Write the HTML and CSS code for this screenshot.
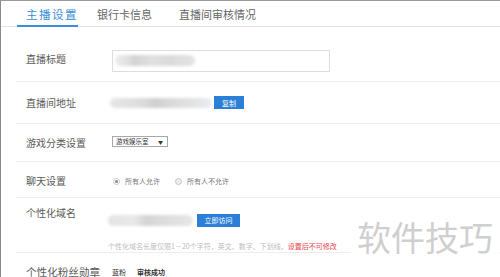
FILE: index.html
```html
<!DOCTYPE html>
<html lang="zh-CN">
<head>
<meta charset="utf-8">
<link rel="stylesheet" href="styles.css">
</head>
<body>
<div class="frame">
  <div class="tabs">
    <div class="tab active">主播设置</div>
    <div class="tab">银行卡信息</div>
    <div class="tab">直播间审核情况</div>
  </div>
  <div class="form">
    <div class="row r1">
      <div class="label">直播标题</div>
      <div class="field">
        <div class="input"><span class="blob b1"></span></div>
      </div>
    </div>
    <div class="row r2">
      <div class="label">直播间地址</div>
      <div class="field inline shift2">
        <span class="blob b2"></span>
        <span class="btn btn-copy">复制</span>
      </div>
    </div>
    <div class="row r3">
      <div class="label">游戏分类设置</div>
      <div class="field">
        <div class="select"><span>游戏娱乐室</span><span class="arrow">▼</span></div>
      </div>
    </div>
    <div class="row r4">
      <div class="label">聊天设置</div>
      <div class="field inline radios">
        <span class="radio checked"></span><span class="rtext">所有人允许</span>
        <span class="radio second"></span><span class="rtext">所有人不允许</span>
      </div>
    </div>
    <div class="row r5">
      <div class="label">个性化域名</div>
      <div class="field shift4">
        <div class="inline">
          <span class="blob b3"></span>
          <span class="btn btn-visit">立即访问</span>
        </div>
        <div class="hint">个性化域名长度仅限1－20个字符，英文、数字、下划线，<span class="warn">设置后不可修改</span></div>
      </div>
    </div>
    <div class="row r6">
      <div class="label big">个性化粉丝勋章</div>
      <div class="field inline badge">
        <span class="fan">蓝粉</span><span class="status">审核成功</span>
      </div>
    </div>
  </div>
  <div class="watermark">软件技巧</div>
</div>
</body>
</html>
```

FILE: styles.css
```css
html, body {
  margin: 0;
  padding: 0;
  background: #fff;
}
body {
  font-family: "Noto Sans CJK SC", "Noto Sans", sans-serif;
  overflow: hidden;
}
.frame {
  position: relative;
  height: 277px;
  box-sizing: border-box;
  border-top: 1px solid #9a9a9a;
  border-left: 1px solid #8a8a8a;
  overflow: hidden;
}
.tabs {
  display: flex;
  align-items: flex-end;
  height: 25px;
  padding-left: 16px;
  border-bottom: 1px solid #e3e3e3;
}
.tab {
  font-size: 11px;
  color: #666;
  line-height: 14px;
  padding: 0 0 5px;
  margin-right: 27px;
  white-space: nowrap;
}
.tab.active {
  font-size: 11.5px;
  letter-spacing: 1.5px;
  color: #3b8ed8;
  padding: 0 0 4px 9px;
  margin-right: 19px;
  border-bottom: 2px solid #3b8ed8;
  margin-bottom: -1px;
}
.form {
  padding-top: 13px;
  padding-left: 15px;
}
.row {
  display: flex;
  align-items: center;
  border-bottom: 1px solid #eeeeee;
  box-sizing: border-box;
}
.label {
  width: 86px;
  padding-left: 10px;
  font-size: 10px;
  color: #5a5a5a;
  line-height: 14px;
  flex: none;
  white-space: nowrap;
}
.label.big {
  font-size: 10.6px;
}
.field {
  flex: none;
}
.inline {
  display: flex;
  align-items: center;
}
.r1 { height: 42px; }
.r1 .label { margin-top: -4px; }
.r2 { height: 42px; }
.r3 { height: 38px; }
.r4 { height: 36px; padding-top: 3px; }
.r5 {
  height: 55px;
  align-items: flex-start;
  padding-top: 8px;
}
.r6 {
  height: 40px;
  align-items: flex-start;
  padding-top: 13px;
  border-bottom: none;
}
.r6 .label { line-height: 12px; }
.input {
  width: 214px;
  height: 20px;
  border: 1px solid #dddddd;
  display: flex;
  align-items: center;
  padding-left: 2px;
}
.blob {
  display: block;
  filter: blur(1.5px);
  border-radius: 6px;
}
.b1 {
  width: 80px;
  height: 11px;
  background: linear-gradient(90deg, #ececec 0%, #e2e2e2 15%, #d2d2d2 25%, #e0e0e0 45%, #dadada 70%, #e4e4e4 100%);
}
.shift2 { margin-left: -2px; }
.shift4 { margin-left: -4px; }
.b2 {
  width: 102px;
  height: 10px;
  background: linear-gradient(90deg, #e6e6e6 0%, #dddddd 30%, #cfcfcf 45%, #dadada 60%, #e4e4e4 85%, #e8eef4 100%);
}
.b3 {
  width: 85px;
  height: 11px;
  background: linear-gradient(90deg, #e4e4e4 0%, #e8e8e8 30%, #d4d4d4 45%, #dcdcdc 65%, #e6e6e6 100%);
}
.btn {
  display: flex;
  align-items: center;
  justify-content: center;
  height: 13px;
  background: #2b7fd6;
  color: #fff;
  font-size: 7px;
}
.btn-copy {
  width: 30px;
  margin-left: 2px;
}
.btn-visit {
  width: 43px;
  margin-left: 4px;
}
.select {
  height: 9px;
  border: 1px solid #a8a8a8;
  display: flex;
  align-items: center;
  justify-content: space-between;
  padding: 0 4px 0 3px;
  box-sizing: content-box;
  font-size: 6.5px;
  color: #333;
  margin-top: -3px;
  width: 47px;
}
.arrow {
  font-size: 5px;
  color: #333;
}
.radios {
  font-size: 7px;
  color: #777;
}
.radio {
  width: 5px;
  height: 5px;
  border: 1px solid #c4c4c4;
  border-radius: 50%;
  box-sizing: content-box;
  margin-left: 1px;
  display: flex;
  align-items: center;
  justify-content: center;
}
.radio.checked::after {
  content: "";
  width: 3px;
  height: 3px;
  border-radius: 50%;
  background: #888;
}
.radio.second {
  margin-left: 15px;
  background: #eee;
}
.rtext {
  margin-left: 5px;
}
.r5 .inline {
  margin-top: 7px;
  height: 14px;
}
.hint {
  margin-top: 14px;
  font-size: 7px;
  line-height: 10px;
  color: #bdbdbd;
  white-space: nowrap;
}
.warn {
  color: #e8454a;
}
.badge {
  font-size: 7px;
  color: #333;
  line-height: 12px;
}
.status {
  margin-left: 11px;
  font-weight: bold;
}
.watermark {
  position: absolute;
  left: 350px;
  top: 216px;
  padding: 0 6px;
  font-size: 34px;
  line-height: 40px;
  color: #cfcfcf;
  background: #fff;
  white-space: nowrap;
}
```
